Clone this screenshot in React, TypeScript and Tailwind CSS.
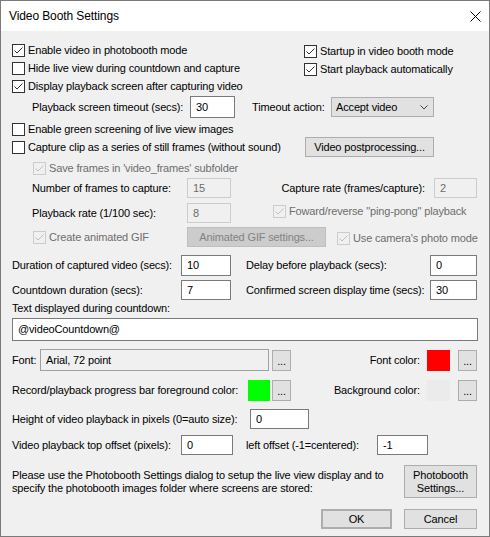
import React from "react";

function Check({ label, checked, disabled }: { label: string; checked?: boolean; disabled?: boolean }) {
  return (
    <div className="flex items-center">
      <svg width="13" height="13" viewBox="0 0 13 13" className="shrink-0">
        <rect
          x="0.5"
          y="0.5"
          width="12"
          height="12"
          fill={disabled ? "#f0f0f0" : "#ffffff"}
          stroke={disabled ? "#cccccc" : "#333333"}
        />
        {checked && (
          <path d="M2.5 6.5 L5 9 L10.5 3.5" fill="none" stroke={disabled ? "#bfbfbf" : "#333333"} strokeWidth="1" />
        )}
      </svg>
      <span className={`ml-[3px] whitespace-nowrap ${disabled ? "text-[#6d6d6d]" : "text-black"}`}>{label}</span>
    </div>
  );
}

function Edit({ value, className, disabled }: { value: string; className: string; disabled?: boolean }) {
  return (
    <div
      className={`flex shrink-0 items-center border pl-[5px] whitespace-nowrap ${
        disabled ? "border-[#cccccc] bg-[#f0f0f0] text-[#6d6d6d]" : "border-[#7a7a7a] bg-white text-black"
      } ${className}`}
    >
      {value}
    </div>
  );
}

function Btn({ children, className, disabled }: { children: React.ReactNode; className: string; disabled?: boolean }) {
  return (
    <div
      className={`flex shrink-0 items-center justify-center border text-center whitespace-nowrap ${
        disabled ? "border-[#bfbfbf] bg-[#cccccc] text-[#838383]" : "border-[#adadad] bg-[#e1e1e1] text-black"
      } ${className}`}
    >
      {children}
    </div>
  );
}

function Dots() {
  return <Btn className="h-[21px] w-[19px] items-end pb-[3px] leading-none">...</Btn>;
}

export default function App() {
  return (
    <div className="flex h-[537px] w-[490px] flex-col border border-[#7a7a7a] bg-white font-['Liberation_Sans',Arial,sans-serif] text-[11px] text-black">
      {/* title bar */}
      <div className="flex h-[30px] shrink-0 items-center justify-between bg-white pl-[8px] pr-[8px]">
        <span className="text-[12px] tracking-[-0.1px]">Video Booth Settings</span>
        <svg width="11" height="11" viewBox="0 0 11 11">
          <path d="M0.5 0.5 L10.5 10.5 M10.5 0.5 L0.5 10.5" stroke="#000" strokeWidth="1" />
        </svg>
      </div>

      <div className="flex flex-1 flex-col bg-[#f0f0f0] pl-[11px] tracking-[-0.15px]">
        {/* mode switches */}
        <div className="mt-[10px] flex">
          <div className="flex w-[292px] flex-col">
            <div className="flex h-[18px] items-center">
              <Check checked label="Enable video in photobooth mode" />
            </div>
            <div className="flex h-[18px] items-center">
              <Check label="Hide live view during countdown and capture" />
            </div>
            <div className="flex h-[18px] items-center">
              <Check checked label="Display playback screen after capturing video" />
            </div>
          </div>
          <div className="flex flex-col pt-[1px]">
            <div className="flex h-[18px] items-center">
              <Check checked label="Startup in video booth mode" />
            </div>
            <div className="flex h-[18px] items-center">
              <Check checked label="Start playback automatically" />
            </div>
          </div>
        </div>

        <div className="mt-[1px] flex h-[22px] items-center">
          <span className="ml-[20px] w-[158px] whitespace-nowrap">Playback screen timeout (secs):</span>
          <Edit value="30" className="h-[22px] w-[45px]" />
          <span className="ml-[17px] w-[79px] whitespace-nowrap">Timeout action:</span>
          <div className="flex h-[20px] w-[103px] items-center justify-between border border-[#adadad] bg-[#e1e1e1] pl-[4px] pr-[5px]">
            <span>Accept video</span>
            <svg width="8" height="5" viewBox="0 0 8 5">
              <path d="M0.5 0.5 L4 4 L7.5 0.5" fill="none" stroke="#444" strokeWidth="1" />
            </svg>
          </div>
        </div>

        <div className="mt-[3px] flex h-[16px] items-center">
          <Check label="Enable green screening of live view images" />
        </div>

        {/* still frame capture */}
        <div className="flex h-[20px] items-center">
          <div className="w-[293px]">
            <Check label="Capture clip as a series of still frames (without sound)" />
          </div>
          <Btn className="h-[20px] w-[129px]">Video postprocessing...</Btn>
        </div>

        <div className="mt-[2px] flex h-[18px] items-center pl-[21px]">
          <Check checked disabled label="Save frames in 'video_frames' subfolder" />
        </div>

        <div className="mt-[1px] flex h-[20px] items-center">
          <span className="ml-[20px] w-[155px] whitespace-nowrap">Number of frames to capture:</span>
          <Edit disabled value="15" className="h-[20px] w-[44px]" />
          <span className="w-[203px] whitespace-nowrap pr-[9px] text-right">Capture rate (frames/capture):</span>
          <Edit disabled value="2" className="h-[20px] w-[43px]" />
        </div>

        <div className="mt-[5px] flex h-[20px] items-center">
          <span className="ml-[20px] w-[155px] whitespace-nowrap">Playback rate (1/100 sec):</span>
          <Edit disabled value="8" className="h-[20px] w-[44px]" />
          <div className="mb-[4px] ml-[42px]">
            <Check checked disabled label={'Foward/reverse "ping-pong" playback'} />
          </div>
        </div>

        <div className="mt-[4px] flex h-[20px] items-center">
          <div className="w-[175px] shrink-0 pl-[21px]">
            <Check checked disabled label="Create animated GIF" />
          </div>
          <Btn disabled className="h-[20px] w-[139px]">
            Animated GIF settings...
          </Btn>
          <div className="ml-[11px] mt-[2px]">
            <Check checked disabled label="Use camera's photo mode" />
          </div>
        </div>

        {/* timing */}
        <div className="mt-[8px] flex h-[21px] items-center">
          <span className="w-[169px] whitespace-nowrap">Duration of captured video (secs):</span>
          <Edit value="10" className="h-[21px] w-[50px]" />
          <span className="ml-[15px] w-[184px] whitespace-nowrap">Delay before playback (secs):</span>
          <Edit value="0" className="h-[21px] w-[47px]" />
        </div>

        <div className="mt-[4px] flex h-[20px] items-center">
          <span className="w-[169px] whitespace-nowrap">Countdown duration (secs):</span>
          <Edit value="7" className="h-[20px] w-[50px]" />
          <span className="ml-[15px] w-[184px] whitespace-nowrap">Confirmed screen display time (secs):</span>
          <Edit value="30" className="h-[20px] w-[47px]" />
        </div>

        <div className="mt-[1px] flex h-[15px] items-center">
          <span>Text displayed during countdown:</span>
        </div>

        <Edit value="@videoCountdown@" className="mt-[2px] h-[23px] w-[466px]" />

        {/* font and colours */}
        <div className="mt-[8px] flex h-[22px] items-center">
          <span className="w-[28px]">Font:</span>
          <div className="flex h-[22px] w-[229px] items-center border border-[#a0a0a0] bg-[#f0f0f0] pl-[5px]">
            Arial, 72 point
          </div>
          <div className="ml-[3px]">
            <Dots />
          </div>
          <span className="w-[136px] whitespace-nowrap pr-[7px] text-right">Font color:</span>
          <div className="h-[21px] w-[23px] bg-[#ff0000]" />
          <div className="ml-[8px]">
            <Dots />
          </div>
        </div>

        <div className="mt-[8px] flex h-[22px] items-center">
          <span className="w-[236px] whitespace-nowrap">Record/playback progress bar foreground color:</span>
          <div className="h-[21px] w-[22px] bg-[#00ff00]" />
          <div className="ml-[2px]">
            <Dots />
          </div>
          <span className="w-[136px] whitespace-nowrap pr-[7px] text-right">Background color:</span>
          <div className="h-[21px] w-[23px] bg-[#ebebeb]" />
          <div className="ml-[8px]">
            <Dots />
          </div>
        </div>

        {/* playback placement */}
        <div className="mt-[8px] flex h-[20px] items-center">
          <span className="w-[238px] whitespace-nowrap">Height of video playback in pixels (0=auto size):</span>
          <Edit value="0" className="h-[20px] w-[59px]" />
        </div>

        <div className="mt-[6px] flex h-[20px] items-center">
          <span className="w-[169px] whitespace-nowrap">Video playback top offset (pixels):</span>
          <Edit value="0" className="h-[20px] w-[52px]" />
          <span className="ml-[13px] w-[131px] whitespace-nowrap">left offset (-1=centered):</span>
          <Edit value="-1" className="h-[20px] w-[51px]" />
        </div>

        <div className="mt-[10px] flex h-[33px] items-start">
          <p className="w-[392px] pt-[4px] leading-[13px] whitespace-nowrap">
            Please use the Photobooth Settings dialog to setup the live view display and to
            <br />
            specify the photobooth images folder where screens are stored:
          </p>
          <Btn className="h-[33px] w-[73px] leading-[13px]">
            Photobooth
            <br />
            Settings...
          </Btn>
        </div>

        <div className="mt-[11px] flex h-[20px] items-center justify-end pr-[12px]">
          <Btn className="h-[20px] w-[71px] border-2 border-[#0078d7]">OK</Btn>
          <Btn className="ml-[12px] h-[20px] w-[73px]">Cancel</Btn>
        </div>
      </div>
    </div>
  );
}
